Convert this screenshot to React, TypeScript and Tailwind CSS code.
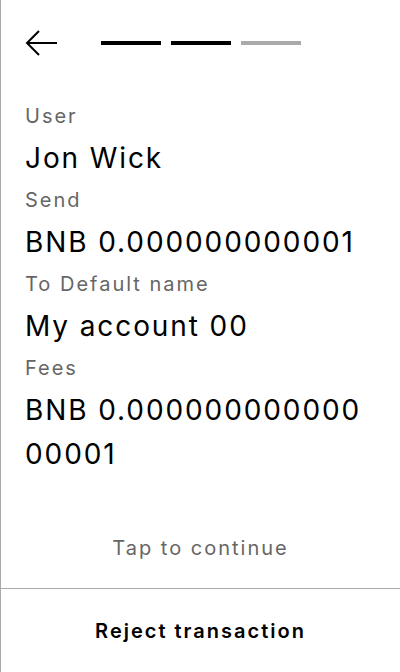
import React from "react";

const rows: { label: string; value: string }[] = [
  { label: "User", value: "Jon Wick" },
  { label: "Send", value: "BNB 0.000000000001" },
  { label: "To Default name", value: "My account 00" },
  { label: "Fees", value: "BNB 0.00000000000000001" },
];

export default function App() {
  return (
    <div
      className="w-[400px] h-[672px] flex flex-col bg-white border-l border-[#aaaaaa] text-black"
      style={{ fontFamily: "Inter, 'Noto Sans', sans-serif" }}
    >
      <div className="h-[86px] flex items-center pl-[24px]">
        <svg width="34" height="28" viewBox="0 0 34 28" className="block">
          <path d="M32 14H3M14 2L2 14L14 26" fill="none" stroke="#000" strokeWidth="2" />
        </svg>
        <div className="ml-[42px] flex gap-[10px]">
          <div className="w-[60px] h-[4px] bg-black" />
          <div className="w-[60px] h-[4px] bg-black" />
          <div className="w-[60px] h-[4px] bg-[#aaaaaa]" />
        </div>
      </div>
      <div className="px-[24px] pt-[10px] flex-1">
        {rows.map((r) => (
          <div key={r.label}>
            <div className="text-[20px] leading-[40px] tracking-[2px] text-[#666666]">{r.label}</div>
            <div className="text-[28px] leading-[44px] tracking-[1.9px] break-all">{r.value}</div>
          </div>
        ))}
      </div>
      <div className="text-center text-[20px] leading-[40px] tracking-[2px] text-[#666666] pb-[20px]">
        Tap to continue
      </div>
      <div className="h-[84px] border-t border-[#aaaaaa] flex items-center justify-center text-[20px] tracking-[2px] font-semibold">
        Reject transaction
      </div>
    </div>
  );
}
